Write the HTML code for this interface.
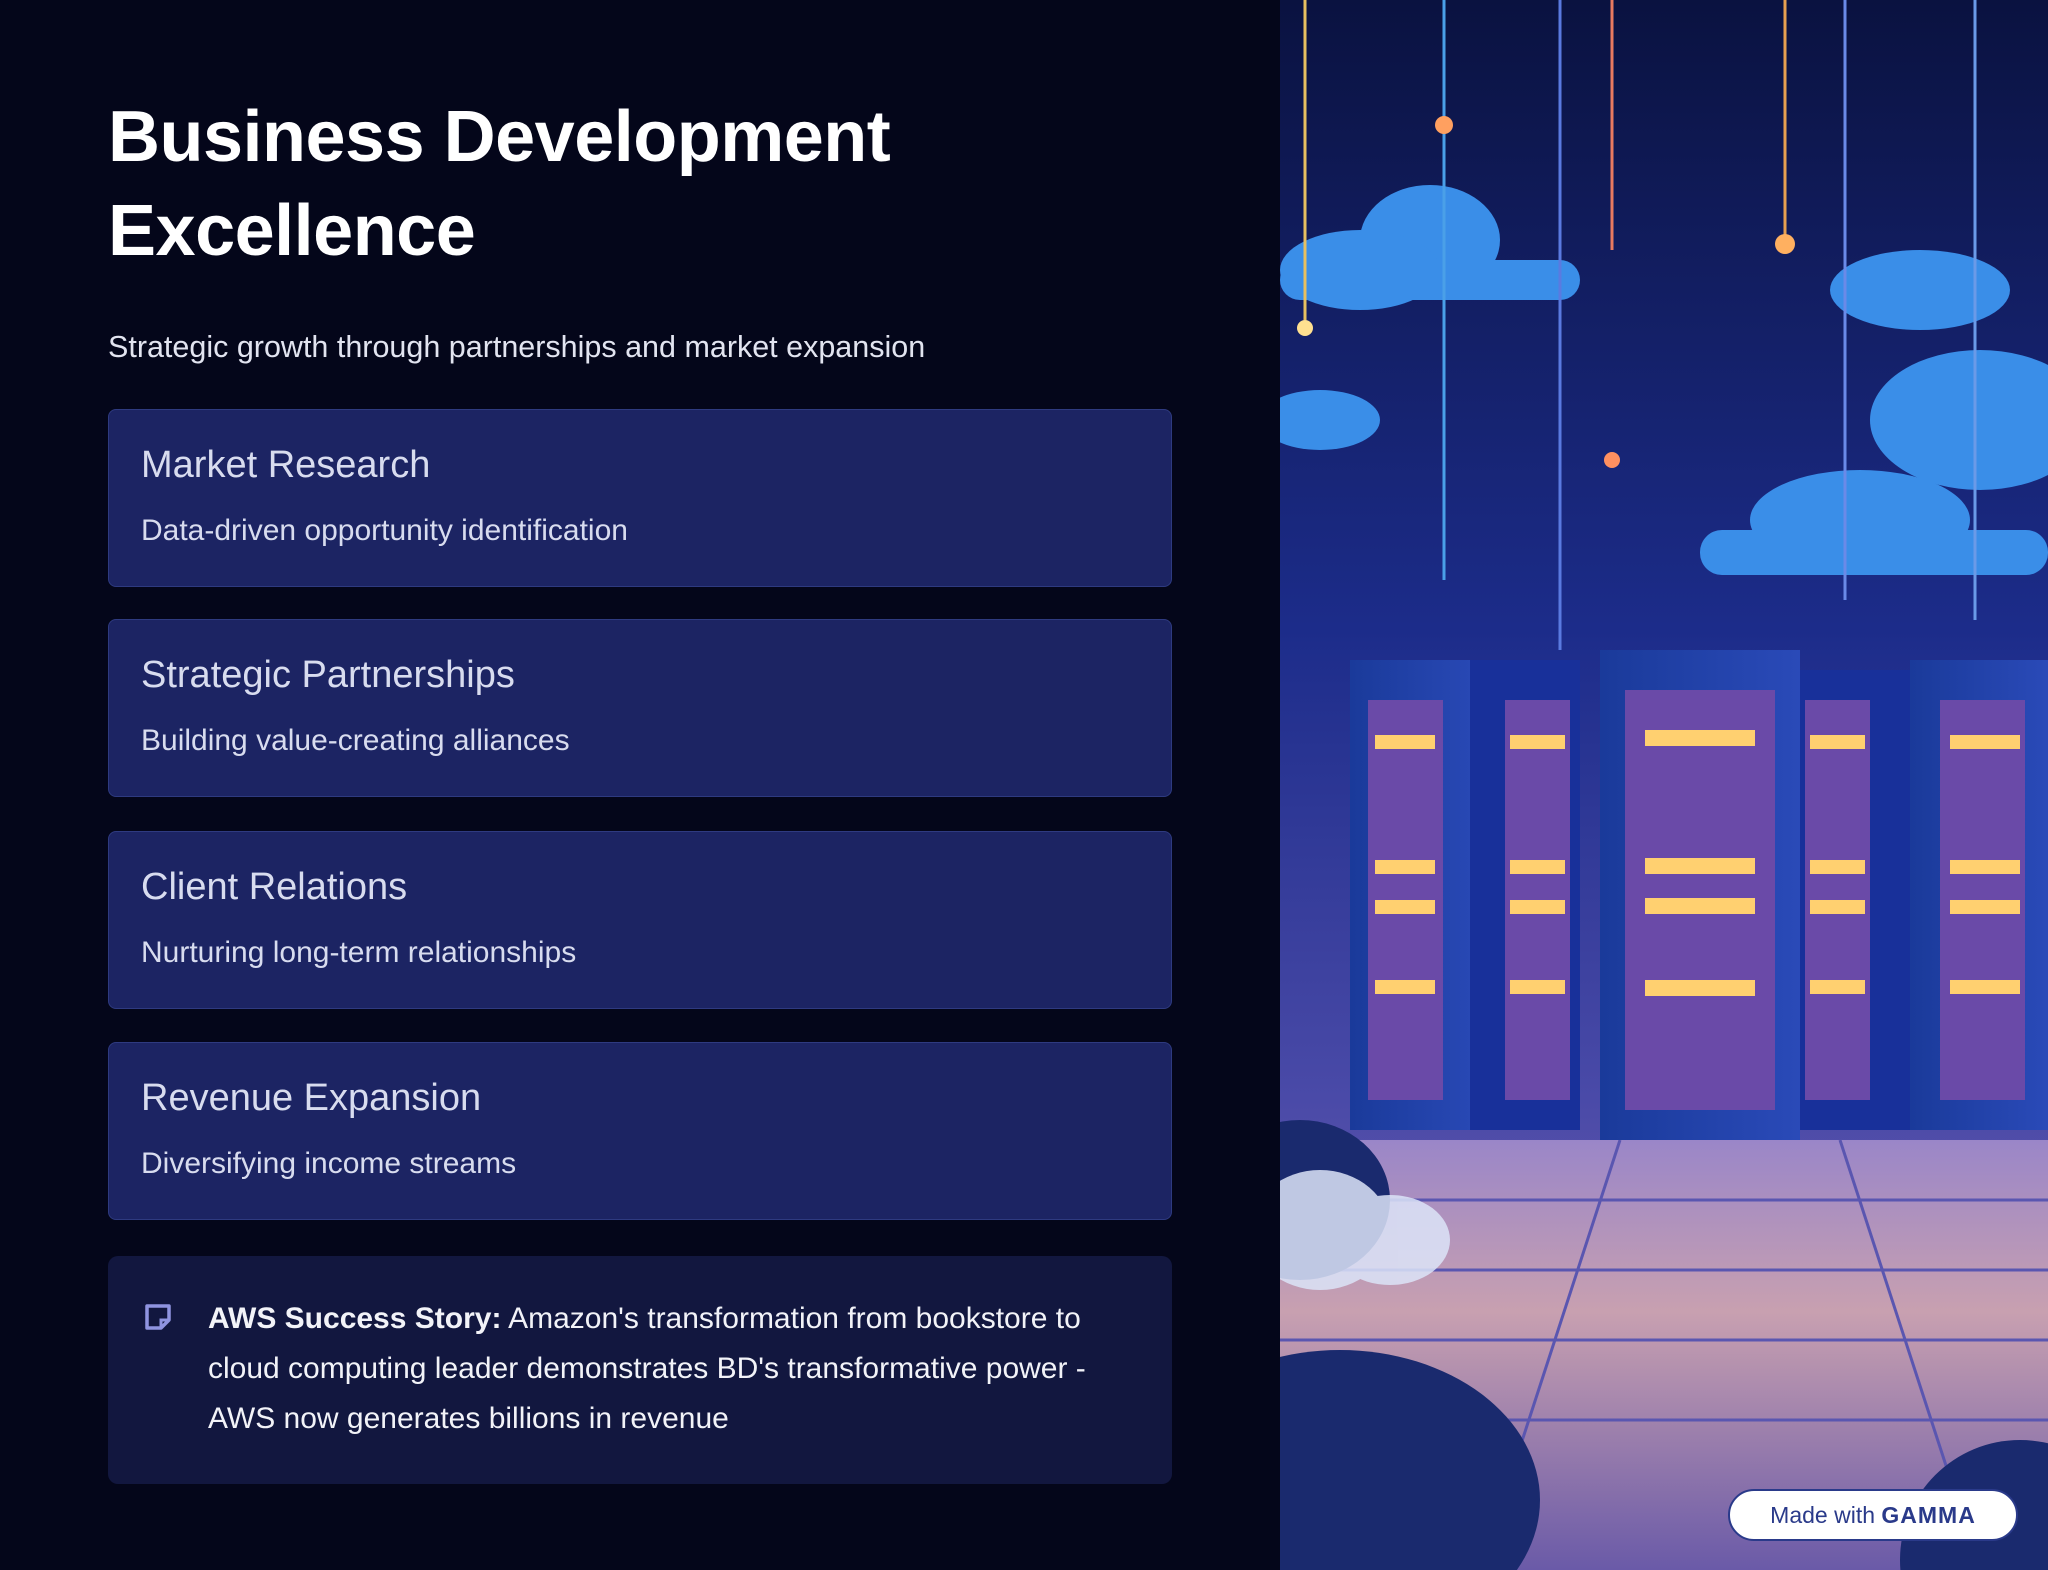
<!DOCTYPE html>
<html><head><meta charset="utf-8"><style>
html,body{margin:0;padding:0;width:2048px;height:1570px;overflow:hidden}
body{background:#04061a;position:relative;font-family:"Liberation Sans",sans-serif}
.left{position:absolute;left:0;top:0;width:1280px;height:1570px;background:#04061a}
h1{position:absolute;left:108px;top:90px;margin:0;color:#fff;font-size:72px;line-height:94px;font-weight:700;letter-spacing:-0.5px}
.sub{position:absolute;left:108px;top:330px;color:#e2e4f0;font-size:30.5px}
.card{position:absolute;left:108px;width:1064px;height:178px;background:#1c2463;border:1.5px solid #2e3a80;border-radius:8px;box-sizing:border-box}
.card .t{position:absolute;left:32px;top:34px;color:#d8dcef;font-size:38px;font-weight:500}
.card .d{position:absolute;left:32px;top:104px;color:#d8dcef;font-size:30px}
.note{position:absolute;left:108px;top:1256px;width:1064px;height:228px;background:#12173f;border-radius:10px}
.note .txt{position:absolute;left:100px;top:38px;width:920px;color:#f2f3f8;font-size:30px;line-height:50px}
.right{position:absolute;left:1280px;top:0;width:768px;height:1570px;overflow:hidden}
.badge{position:absolute;left:1728px;top:1489px;width:290px;height:52px;box-sizing:border-box;border:2px solid #2a3a8a;border-radius:26px;background:#fff;color:#2a3a8a;font-size:23px;text-align:center;line-height:48px}
.badge b{font-weight:900;letter-spacing:1px}
</style></head><body>
<div class="left">
<h1>Business Development<br>Excellence</h1>
<div class="sub">Strategic growth through partnerships and market expansion</div>
<div class="card" style="top:409px"><div class="t">Market Research</div><div class="d">Data-driven opportunity identification</div></div>
<div class="card" style="top:619px"><div class="t">Strategic Partnerships</div><div class="d">Building value-creating alliances</div></div>
<div class="card" style="top:831px"><div class="t">Client Relations</div><div class="d">Nurturing long-term relationships</div></div>
<div class="card" style="top:1042px"><div class="t">Revenue Expansion</div><div class="d">Diversifying income streams</div></div>
<div class="note">
<svg style="position:absolute;left:35px;top:46px" width="30" height="30" viewBox="0 0 30 30"><path d="M4 4h22v14l-8 8H4z" fill="none" stroke="#8f94e0" stroke-width="3.5" stroke-linejoin="round"/><path d="M18 26v-8h8" fill="none" stroke="#8f94e0" stroke-width="3"/></svg>
<div class="txt"><b>AWS Success Story:</b> Amazon's transformation from bookstore to cloud computing leader demonstrates BD's transformative power - AWS now generates billions in revenue</div>
</div>
</div>
<div class="right">
<svg width="768" height="1570" viewBox="0 0 768 1570">
<defs>
<linearGradient id="sky" x1="0" y1="0" x2="0" y2="1"><stop offset="0" stop-color="#0a1240"/><stop offset="0.4" stop-color="#1c2c8a"/><stop offset="0.7" stop-color="#4a4aa8"/><stop offset="1" stop-color="#8a6ab0"/></linearGradient>
<linearGradient id="floor" x1="0" y1="0" x2="0" y2="1"><stop offset="0" stop-color="#9a86c8"/><stop offset="0.4" stop-color="#c8a0b0"/><stop offset="1" stop-color="#6a5aa8"/></linearGradient>
<linearGradient id="rack" x1="0" y1="0" x2="1" y2="0"><stop offset="0" stop-color="#1a3a9a"/><stop offset="1" stop-color="#2a4ab8"/></linearGradient>
</defs>
<rect width="768" height="1570" fill="url(#sky)"/>
<rect y="1140" width="768" height="430" fill="url(#floor)"/>
<g stroke="#5a56b0" stroke-width="3"><line x1="0" y1="1200" x2="768" y2="1200"/><line x1="0" y1="1270" x2="768" y2="1270"/><line x1="0" y1="1340" x2="768" y2="1340"/><line x1="0" y1="1420" x2="768" y2="1420"/><line x1="340" y1="1140" x2="200" y2="1570"/><line x1="560" y1="1140" x2="700" y2="1570"/></g>
<g fill="#3a8ee8"><ellipse cx="150" cy="240" rx="70" ry="55"/><ellipse cx="80" cy="270" rx="80" ry="40"/><rect x="0" y="260" width="300" height="40" rx="20"/><ellipse cx="700" cy="420" rx="110" ry="70"/><ellipse cx="580" cy="520" rx="110" ry="50"/><rect x="420" y="530" width="348" height="45" rx="22"/><ellipse cx="40" cy="420" rx="60" ry="30"/><ellipse cx="640" cy="290" rx="90" ry="40"/></g>
<g stroke-width="3"><line x1="164" y1="0" x2="164" y2="580" stroke="#4aa0e8"/><line x1="332" y1="0" x2="332" y2="250" stroke="#e87a60"/><line x1="505" y1="0" x2="505" y2="240" stroke="#e8a050"/><line x1="25" y1="0" x2="25" y2="320" stroke="#e8c060"/><line x1="565" y1="0" x2="565" y2="600" stroke="#6a8ae8"/><line x1="280" y1="0" x2="280" y2="650" stroke="#5a7ae0"/><line x1="695" y1="0" x2="695" y2="620" stroke="#6a9ae8"/></g>
<g><circle cx="164" cy="125" r="9" fill="#ffa060"/><circle cx="505" cy="244" r="10" fill="#ffb060"/><circle cx="25" cy="328" r="8" fill="#ffe090"/><circle cx="332" cy="460" r="8" fill="#ff9060"/></g>
<g>
<rect x="70" y="660" width="140" height="470" fill="url(#rack)"/><rect x="190" y="660" width="110" height="470" fill="#18309a"/>
<rect x="320" y="650" width="200" height="490" fill="url(#rack)"/>
<rect x="520" y="670" width="110" height="460" fill="#18309a"/><rect x="630" y="660" width="138" height="470" fill="url(#rack)"/>
</g>
<g fill="#6a4aa8"><rect x="88" y="700" width="75" height="400"/><rect x="225" y="700" width="65" height="400"/><rect x="345" y="690" width="150" height="420"/><rect x="525" y="700" width="65" height="400"/><rect x="660" y="700" width="85" height="400"/></g>
<g fill="#ffd070">
<rect x="95" y="735" width="60" height="14"/><rect x="230" y="735" width="55" height="14"/><rect x="365" y="730" width="110" height="16"/><rect x="530" y="735" width="55" height="14"/><rect x="670" y="735" width="70" height="14"/>
<rect x="95" y="860" width="60" height="14"/><rect x="230" y="860" width="55" height="14"/><rect x="365" y="858" width="110" height="16"/><rect x="530" y="860" width="55" height="14"/><rect x="670" y="860" width="70" height="14"/>
<rect x="95" y="900" width="60" height="14"/><rect x="230" y="900" width="55" height="14"/><rect x="365" y="898" width="110" height="16"/><rect x="530" y="900" width="55" height="14"/><rect x="670" y="900" width="70" height="14"/>
<rect x="95" y="980" width="60" height="14"/><rect x="230" y="980" width="55" height="14"/><rect x="365" y="980" width="110" height="16"/><rect x="530" y="980" width="55" height="14"/><rect x="670" y="980" width="70" height="14"/>
</g>
<g fill="#1a2a6e"><ellipse cx="20" cy="1200" rx="90" ry="80"/><ellipse cx="60" cy="1500" rx="200" ry="150"/><ellipse cx="740" cy="1560" rx="120" ry="120"/></g>
<g fill="#dce4f8" opacity="0.85"><ellipse cx="40" cy="1230" rx="70" ry="60"/><ellipse cx="110" cy="1240" rx="60" ry="45"/></g>
</svg>
</div>
<div class="badge">Made with <b>GAMMA</b></div>
</body></html>
